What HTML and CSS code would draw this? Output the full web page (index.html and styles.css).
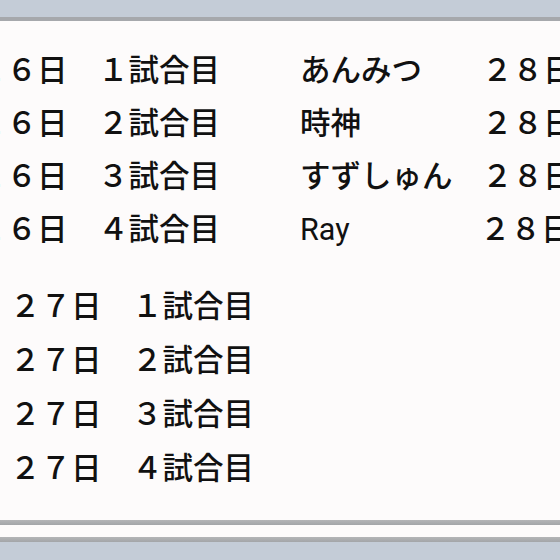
FILE: index.html
```html
<!DOCTYPE html>
<html lang="ja">
<head>
<meta charset="utf-8">
<title>試合日程</title>
<link rel="stylesheet" href="styles.css">
</head>
<body>
<div class="screen">
  <div class="topbar"></div>
  <main class="content">
    <section class="day-block">
      <ul class="games first">
        <li>２６日　１試合目</li>
        <li>２６日　２試合目</li>
        <li>２６日　３試合目</li>
        <li>２６日　４試合目</li>
      </ul>
      <ul class="players">
        <li><span class="name">あんみつ</span><span class="date">２８日　１試合目</span></li>
        <li><span class="name">時神</span><span class="date">２８日　２試合目</span></li>
        <li><span class="name">すずしゅん</span><span class="date">２８日　３試合目</span></li>
        <li><span class="name latin">Ray</span><span class="date shift">２８日　４試合目</span></li>
      </ul>
    </section>
    <ul class="games second">
      <li>２７日　１試合目</li>
      <li>２７日　２試合目</li>
      <li>２７日　３試合目</li>
      <li>２７日　４試合目</li>
    </ul>
  </main>
  <div class="bottom">
    <div class="rule"></div>
    <div class="gapline"></div>
    <div class="rule"></div>
    <div class="dock"></div>
  </div>
</div>
</body>
</html>
```
FILE: styles.css
```css
html, body {
  margin: 0;
  padding: 0;
}
body {
  width: 560px;
  height: 560px;
  overflow: hidden;
  background: #fdfbfb;
  font-family: Roboto, "Noto Sans CJK JP", sans-serif;
  color: #111;
}
.screen {
  display: flex;
  flex-direction: column;
  height: 560px;
  overflow: hidden;
}
.topbar {
  height: 17px;
  background: #c4ccd7;
  border-bottom: 4px solid #a6a8ac;
  flex: none;
}
.content {
  height: 499px;
  flex: none;
  background: #fdfbfb;
  padding-top: 23px;
  box-sizing: border-box;
  overflow: hidden;
  font-size: 30.5px;
  font-weight: 500;
}
ul {
  list-style: none;
  margin: 0;
  padding: 0;
}
li {
  white-space: pre;
}
.day-block {
  display: flex;
  margin-left: -24px;
  width: 600px;
}
.games.first {
  width: 324px;
  flex: none;
}
.games.first li,
.players li {
  height: 53px;
  line-height: 53px;
}
.players li {
  display: flex;
}
.name {
  width: 182px;
  flex: none;
}
.name.latin {
  font-weight: 400;
}
.date.shift {
  margin-left: -2px;
}
.games.second {
  margin-top: 24px;
  margin-left: 10px;
}
.games.second li {
  height: 54px;
  line-height: 54px;
}
.bottom {
  flex: none;
  display: flex;
  flex-direction: column;
}
.rule {
  height: 5px;
  background: linear-gradient(#b4b5b7, #a3a5a8);
}
.gapline {
  height: 12px;
  background: #fdfbfb;
}
.dock {
  height: 18px;
  background: #c4ccd7;
}
```
